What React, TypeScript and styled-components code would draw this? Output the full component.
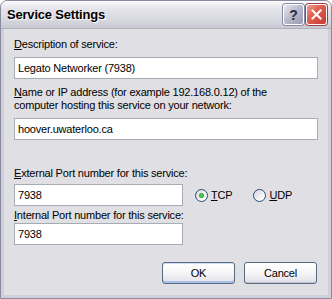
import React from 'react';
import styled, { createGlobalStyle } from 'styled-components';

const GlobalStyle = createGlobalStyle`
    html, body {
        margin: 0;
        padding: 0;
        background: #ffffff;
    }
`;

const Window = styled.div`
    width: 332px;
    height: 299px;
    box-sizing: border-box;
    display: flex;
    flex-direction: column;
    border: 1px solid #8a8aa0;
    border-radius: 7px 7px 0 0;
    overflow: hidden;
    background: #c9c9d4;
    font-family: 'Liberation Sans', Arial, sans-serif;
    font-size: 11px;
    color: #000000;
`;

const TitleBar = styled.div`
    height: 28px;
    flex: none;
    display: flex;
    align-items: center;
    justify-content: space-between;
    padding: 0 4px 0 6px;
    box-sizing: border-box;
    background: linear-gradient(
        to bottom,
        #ffffff 0%,
        #f2f2f6 10%,
        #e4e4ea 30%,
        #d8d8e0 70%,
        #c8c8d2 100%
    );
    border-bottom: 1px solid #b0b0c0;
`;

const Title = styled.span`
    font-family: 'Liberation Sans', Arial, sans-serif;
    font-weight: bold;
    font-size: 13px;
    letter-spacing: -0.2px;
    color: #000000;
    text-shadow: 1px 1px 0 #ffffff;
`;

const CaptionButtons = styled.div`
    display: flex;
    gap: 2px;
`;

const CaptionButton = styled.div<{ $close?: boolean }>`
    width: 21px;
    height: 21px;
    box-sizing: border-box;
    border-radius: 3px;
    border: 1px solid #ffffff;
    box-shadow: 0 0 0 1px ${({ $close }) => ($close ? '#a04040' : '#8a8aa8')};
    background: ${({ $close }) =>
        $close
            ? 'linear-gradient(135deg, #f0a090 0%, #e06050 40%, #c83a30 100%)'
            : 'linear-gradient(135deg, #e8e8f0 0%, #b8b8cc 50%, #9a9ab4 100%)'};
    display: flex;
    align-items: center;
    justify-content: center;
    font-family: 'Liberation Sans', Arial, sans-serif;
    font-weight: bold;
    font-size: 14px;
    color: #2a2a3a;
`;

const Body = styled.div`
    flex: 1;
    display: flex;
    flex-direction: column;
    background: #e0dfe3;
    border: 3px solid #d0d0da;
    border-top: none;
    padding: 9px 10px 0 10px;
    letter-spacing: -0.2px;
`;

const Label = styled.div<{ $mt?: number }>`
    line-height: 13px;
    margin-top: ${({ $mt }) => $mt ?? 0}px;
    white-space: nowrap;
`;

const TextBox = styled.input<{ $mt?: number; $w?: number }>`
    display: block;
    box-sizing: border-box;
    width: ${({ $w }) => ($w ? `${$w}px` : '100%')};
    height: 22px;
    margin: ${({ $mt }) => $mt ?? 0}px 0 0 0;
    padding: 0 3px;
    border: 1px solid #a5acb2;
    background: #ffffff;
    font-family: 'Liberation Sans', Arial, sans-serif;
    font-size: 11px;
    letter-spacing: -0.2px;
    color: #000000;
    outline: none;
`;

const PortRow = styled.div`
    display: flex;
    align-items: center;
    margin-top: 4px;
`;

const RadioGroup = styled.div`
    display: flex;
    align-items: center;
    gap: 21px;
    margin-left: 12px;
`;

const RadioOption = styled.label`
    display: flex;
    align-items: center;
    gap: 3px;
`;

const RadioCircle = styled.span<{ $checked?: boolean }>`
    width: 13px;
    height: 13px;
    box-sizing: border-box;
    border-radius: 50%;
    border: 1px solid #2a4c74;
    background: linear-gradient(135deg, #d4d4dc 0%, #f4f4f6 60%, #ffffff 100%);
    display: flex;
    align-items: center;
    justify-content: center;

    &::after {
        content: '';
        width: 5px;
        height: 5px;
        border-radius: 50%;
        background: ${({ $checked }) => ($checked ? 'radial-gradient(circle, #5ad05a 0%, #1a9a1a 100%)' : 'transparent')};
    }
`;

const ButtonRow = styled.div`
    display: flex;
    justify-content: flex-end;
    gap: 9px;
    margin-top: 17px;
    padding-right: 1px;
`;

const Button = styled.div<{ $default?: boolean }>`
    width: 73px;
    height: 22px;
    box-sizing: border-box;
    border: 1px solid #5a6a80;
    border-radius: 3px;
    background: linear-gradient(to bottom, #ffffff 0%, #f6f6f8 50%, #e4e4ea 90%, #d4d4de 100%);
    box-shadow: ${({ $default }) =>
        $default ? 'inset 0 -2px 0 #a8c0e8, inset 0 1px 0 #cfdcf4' : 'inset 0 -1px 0 #c4c4d4'};
    display: flex;
    align-items: center;
    justify-content: center;
    font-size: 11px;
`;

export default function App() {
    return (
        <>
            <GlobalStyle />
            <Window>
                <TitleBar>
                    <Title>Service Settings</Title>
                    <CaptionButtons>
                        <CaptionButton>?</CaptionButton>
                        <CaptionButton $close>
                            <svg width="11" height="11" viewBox="0 0 11 11">
                                <path d="M1.5 1.5 L9.5 9.5 M9.5 1.5 L1.5 9.5" stroke="#ffffff" strokeWidth="2" strokeLinecap="square" />
                            </svg>
                        </CaptionButton>
                    </CaptionButtons>
                </TitleBar>
                <Body>
                    <Label>
                        <u>D</u>escription of service:
                    </Label>
                    <TextBox $mt={6} defaultValue="Legato Networker (7938)" readOnly />
                    <Label $mt={7}>
                        <u>N</u>ame or IP address (for example 192.168.0.12) of the
                        <br />
                        computer hosting this service on your network:
                    </Label>
                    <TextBox $mt={6} defaultValue="hoover.uwaterloo.ca" readOnly />
                    <Label $mt={27}>
                        <u>E</u>xternal Port number for this service:
                    </Label>
                    <PortRow>
                        <TextBox $w={169} defaultValue="7938" readOnly />
                        <RadioGroup>
                            <RadioOption>
                                <RadioCircle $checked />
                                <span>
                                    <u>T</u>CP
                                </span>
                            </RadioOption>
                            <RadioOption>
                                <RadioCircle />
                                <span>
                                    <u>U</u>DP
                                </span>
                            </RadioOption>
                        </RadioGroup>
                    </PortRow>
                    <Label $mt={3}>
                        <u>I</u>nternal Port number for this service:
                    </Label>
                    <TextBox $mt={1} $w={169} defaultValue="7938" readOnly />
                    <ButtonRow>
                        <Button $default>OK</Button>
                        <Button>Cancel</Button>
                    </ButtonRow>
                </Body>
            </Window>
        </>
    );
}
